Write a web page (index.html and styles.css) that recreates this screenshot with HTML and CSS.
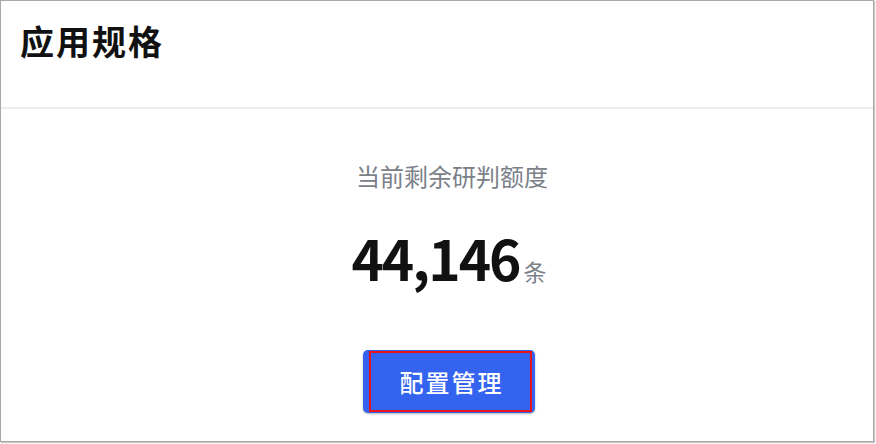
FILE: index.html
```html
<!DOCTYPE html>
<html lang="zh-CN">
<head>
<meta charset="utf-8">
<link rel="stylesheet" href="styles.css">
</head>
<body>
<div class="window">
  <header class="head">
    <h1 class="title">应用规格</h1>
  </header>
  <main class="content">
    <div class="label">当前剩余研判额度</div>
    <div class="amount"><span class="num">44,146</span><span class="unit">条</span></div>
    <button class="btn"><span class="btn-inner">配置管理</span></button>
  </main>
</div>
</body>
</html>
```
FILE: styles.css
```css
html, body {
  margin: 0;
  padding: 0;
  background: #ffffff;
}
body {
  font-family: "Noto Sans CJK SC", "Noto Sans", sans-serif;
  width: 876px;
  height: 444px;
  overflow: hidden;
}
.window {
  box-sizing: border-box;
  width: 874px;
  height: 442px;
  border: 1px solid #a8a8a8;
  box-shadow: 1px 1px 1px #c8c8c8;
  display: flex;
  flex-direction: column;
  background: #fff;
}
.head {
  height: 106px;
  border-bottom: 2px solid #ececf1;
  padding: 0 19px;
  box-sizing: content-box;
}
.title {
  margin: 0;
  padding-top: 23px;
  font-size: 34px;
  line-height: 34px;
  letter-spacing: 2px;
  font-weight: 700;
  color: #111;
}
.content {
  display: flex;
  flex-direction: column;
  align-items: center;
  padding-left: 24px;
}
.label {
  margin-top: 55px;
  font-size: 24px;
  line-height: 24px;
  color: #7b8089;
  padding-left: 6px;
}
.amount {
  margin-top: 42px;
  display: flex;
  align-items: baseline;
  color: #111;
}
.num {
  font-size: 55px;
  line-height: 55px;
  font-weight: 700;
  letter-spacing: -2px;
}
.unit {
  font-size: 23px;
  line-height: 23px;
  color: #7b8089;
  margin-left: 4px;
}
.btn {
  margin-top: 65px;
  width: 172px;
  height: 63px;
  padding: 1px 3px 1px 6px;
  border: none;
  border-radius: 5px;
  background: #3464ef;
  box-shadow: 0 1px 2px rgba(0,0,0,0.3);
  display: flex;
  box-sizing: border-box;
}
.btn-inner {
  flex: 1;
  border: 2px solid #e8141c;
  display: flex;
  align-items: center;
  justify-content: center;
  color: #fff;
  font-family: "Noto Sans CJK SC", sans-serif;
  font-size: 24px;
  font-weight: 500;
  letter-spacing: 2px;
  padding-left: 2px;
}
```
